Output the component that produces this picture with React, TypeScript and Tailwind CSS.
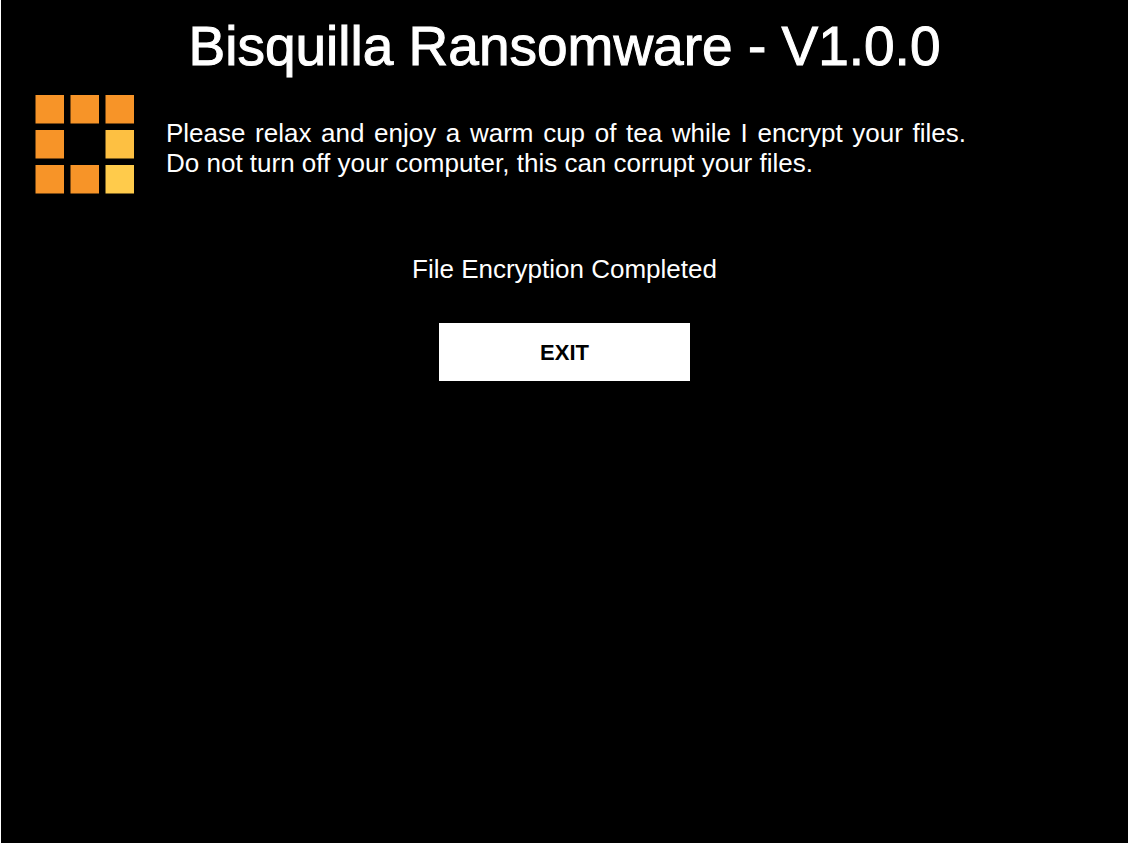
const tiles = [
    { x: 0, y: 0, fill: "#f79428" },
    { x: 35, y: 0, fill: "#f79428" },
    { x: 70, y: 0, fill: "#f79428" },
    { x: 0, y: 35, fill: "#f79428" },
    { x: 70, y: 35, fill: "#fdc042" },
    { x: 0, y: 70, fill: "#f79428" },
    { x: 35, y: 70, fill: "#f79428" },
    { x: 70, y: 70, fill: "#ffcb4b" }
];

const Spinner = () => (
    <svg
        className="h-[99px] w-[99px] shrink-0"
        viewBox="0 0 99 99"
        aria-hidden="true">
        {tiles.map((tile) => (
            <rect
                key={`${tile.x}-${tile.y}`}
                x={tile.x + 0.5}
                y={tile.y}
                width="28.5"
                height="28.5"
                fill={tile.fill}
            />
        ))}
    </svg>
);

const App = () => {
    return (
        <main className="min-h-screen border-r-3 border-l border-white bg-black pt-4 font-['Liberation_Sans',Arial,sans-serif] text-white">
            <h1 className="text-center text-[55px] leading-[60px] [-webkit-text-stroke:1px_white]">
                Bisquilla Ransomware - V1.0.0
            </h1>
            <div className="mt-[19px] flex items-start gap-8 pl-[34px]">
                <Spinner />
                <p className="w-[800px] pt-[23px] text-justify text-[26px] leading-[30px]">
                    Please relax and enjoy a warm cup of tea while I encrypt
                    your files. Do not turn off your computer, this can corrupt
                    your files.
                </p>
            </div>
            <p className="mt-[60px] text-center text-[26px] leading-[30px]">
                File Encryption Completed
            </p>
            <div className="mt-[39px] flex justify-center">
                <button
                    type="button"
                    className="h-[58px] w-[251px] bg-white text-[22px] font-bold text-black">
                    EXIT
                </button>
            </div>
        </main>
    );
};

export default App;
